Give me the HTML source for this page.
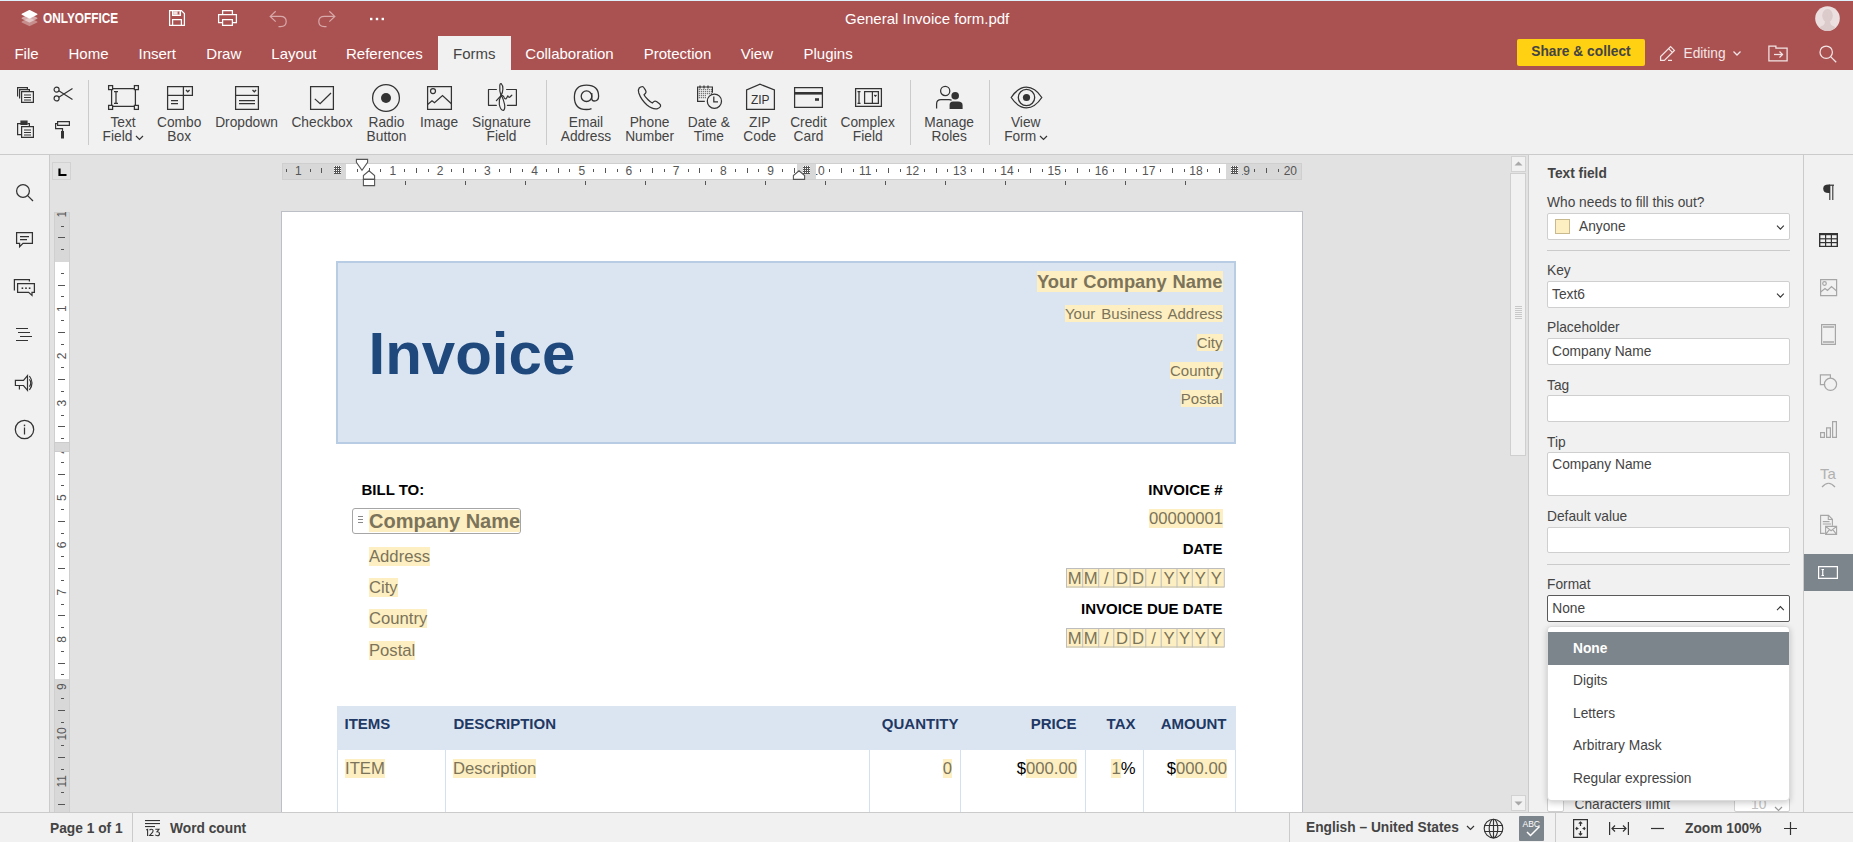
<!DOCTYPE html>
<html><head><meta charset="utf-8"><title>ONLYOFFICE</title>
<style>
html,body{margin:0;padding:0;width:1853px;height:842px;overflow:hidden;background:#f1f1f1;font-family:"Liberation Sans", sans-serif;}
.a{position:absolute;}
.t{position:absolute;white-space:nowrap;}
svg.a{overflow:visible;}
</style></head><body>
<div class="a" style="left:0px;top:0px;width:1853px;height:1px;background:#ddf2fc"></div>
<div class="a" style="left:0px;top:1px;width:1853px;height:69px;background:#aa5252"></div>
<svg class="a" style="left:21px;top:9px;" width="17" height="18" viewBox="0 0 17 18"><path d="M8.2 8.7 Q8.5 8.6 8.8 8.7 L16.2 12.4 Q16.8 12.9 16.2 13.4 L8.8 17.1 Q8.5 17.2 8.2 17.1 L0.8 13.4 Q0.2 12.9 0.8 12.4 Z" fill="#fff" opacity="0.35"/><path d="M0 0 H17 V12.3 L8.5 16.5 L0 12.3 Z" fill="none"/><path d="M8.2 5.0 Q8.5 4.8 8.8 5.0 L16.2 8.7 Q16.8 9.2 16.2 9.7 L8.8 13.4 Q8.5 13.5 8.2 13.4 L0.8 9.7 Q0.2 9.2 0.8 8.7 Z" fill="#fff" opacity="0.5"/><path d="M8.2 1.0 Q8.5 0.9 8.8 1.0 L16.2 4.7 Q16.8 5.2 16.2 5.7 L8.8 9.4 Q8.5 9.6 8.2 9.4 L0.8 5.7 Q0.2 5.2 0.8 4.7 Z" fill="#fff" opacity="1"/></svg>
<div class="t" style="left:42.60px;top:11.15px;font-size:14px;line-height:14px;font-weight:700;color:#fff;transform:scaleX(0.845);transform-origin:0 0;">ONLYOFFICE</div>
<svg class="a" style="left:168px;top:9px;" width="18" height="18" viewBox="0 0 18 18"><g fill="none" stroke="#fff" stroke-width="1.25">
      <path d="M1.6 1.6 H13.4 L16.4 4.6 V16.4 H1.6 Z"/>
      <path d="M4.6 1.6 V6.4 H12.4 V1.6"/>
      <path d="M4.6 16.4 V10.6 H13.4 V16.4"/>
      </g><rect x="5.2" y="2.2" width="6.6" height="3.6" fill="#f3dede"/><rect x="9.6" y="2.6" width="1.6" height="2.8" fill="#aa5252"/></svg>
<svg class="a" style="left:217px;top:9px;" width="21" height="18" viewBox="0 0 21 18"><g fill="none" stroke="#fff" stroke-width="1.25">
      <path d="M5.6 5.6 V1.6 H15.4 V5.6"/>
      <path d="M5.6 13.6 H1.6 V5.6 H19.4 V13.6 H15.4"/>
      <path d="M5.6 10.6 H15.4 V16.4 H5.6 Z"/></g></svg>
<svg class="a" style="left:269px;top:10px;" width="19" height="18" viewBox="0 0 19 18"><path d="M6.7 1.2 L1.2 6.4 L6.7 11.6 M1.2 6.4 H11.5 Q17.2 6.4 17.2 11.5 Q17.2 16.6 11.5 16.6 H9.5" fill="none" stroke="#d9a9a9" stroke-width="1.2"/></svg>
<svg class="a" style="left:318px;top:10px;" width="19" height="18" viewBox="0 0 19 18"><path d="M11.3 1.2 L16.8 6.4 L11.3 11.6 M16.8 6.4 H6.5 Q0.8 6.4 0.8 11.5 Q0.8 16.6 6.5 16.6 H8.5" fill="none" stroke="#d9a9a9" stroke-width="1.2"/></svg>
<svg class="a" style="left:369px;top:17px;" width="16" height="4" viewBox="0 0 16 4"><g fill="#fff"><rect x="1" y="0.8" width="2.4" height="2.4"/><rect x="6.8" y="0.8" width="2.4" height="2.4"/><rect x="12.6" y="0.8" width="2.4" height="2.4"/></g></svg>
<div class="t" style="left:845.00px;top:10.70px;font-size:15px;line-height:15px;font-weight:400;color:#fff;">General Invoice form.pdf</div>
<svg class="a" style="left:1815px;top:6px;" width="25" height="25" viewBox="0 0 25 25"><defs><clipPath id="avc"><circle cx="12.5" cy="12.5" r="12.3"/></clipPath></defs>
      <circle cx="12.5" cy="12.5" r="12.3" fill="#ecdfdf"/>
      <g clip-path="url(#avc)" fill="#dbcbcb"><ellipse cx="12.5" cy="9.6" rx="5.3" ry="6.6"/>
      <path d="M10 14 H15 Q15 18.5 17 19.5 Q21.5 20.5 22 26 H3 Q3.5 20.5 8 19.5 Q10 18.5 10 14 Z"/></g></svg>
<div class="a" style="left:438px;top:36px;width:73px;height:34px;background:#f1f1f1"></div>
<div class="t" style="left:14.40px;top:46.30px;font-size:15px;line-height:15px;font-weight:400;color:#fff;">File</div>
<div class="t" style="left:68.50px;top:46.30px;font-size:15px;line-height:15px;font-weight:400;color:#fff;">Home</div>
<div class="t" style="left:138.50px;top:46.30px;font-size:15px;line-height:15px;font-weight:400;color:#fff;">Insert</div>
<div class="t" style="left:206.30px;top:46.30px;font-size:15px;line-height:15px;font-weight:400;color:#fff;">Draw</div>
<div class="t" style="left:271.30px;top:46.30px;font-size:15px;line-height:15px;font-weight:400;color:#fff;">Layout</div>
<div class="t" style="left:346.00px;top:46.30px;font-size:15px;line-height:15px;font-weight:400;color:#fff;">References</div>
<div class="t" style="left:453.00px;top:46.30px;font-size:15px;line-height:15px;font-weight:400;color:#444;">Forms</div>
<div class="t" style="left:525.30px;top:46.30px;font-size:15px;line-height:15px;font-weight:400;color:#fff;">Collaboration</div>
<div class="t" style="left:643.70px;top:46.30px;font-size:15px;line-height:15px;font-weight:400;color:#fff;">Protection</div>
<div class="t" style="left:740.80px;top:46.30px;font-size:15px;line-height:15px;font-weight:400;color:#fff;">View</div>
<div class="t" style="left:803.50px;top:46.30px;font-size:15px;line-height:15px;font-weight:400;color:#fff;">Plugins</div>
<div class="a" style="left:1517px;top:39px;width:128px;height:27px;background:#ffd112;border-radius:2px"></div>
<div class="t" style="left:1531.30px;top:44.86px;font-size:13.75px;line-height:13.75px;font-weight:700;color:#444;">Share &amp; collect</div>
<svg class="a" style="left:1659px;top:44px;" width="18" height="18" viewBox="0 0 18 18"><g fill="none" stroke="#f3e5e5" stroke-width="1.25">
      <path d="M1.6 16.4 V12.6 L11.6 2.6 L15.4 6.4 L5.4 16.4 Z"/><path d="M9.6 4.6 L13.4 8.4"/><path d="M9 16.4 H13"/></g></svg>
<div class="t" style="left:1683.50px;top:46.86px;font-size:13.75px;line-height:13.75px;font-weight:400;color:#f3e5e5;">Editing</div>
<svg class="a" style="left:1732px;top:50px;" width="10" height="7" viewBox="0 0 10 7"><path d="M1.5 1.5 L5 5 L8.5 1.5" fill="none" stroke="#f3e5e5" stroke-width="1.25"/></svg>
<svg class="a" style="left:1768px;top:45px;" width="21" height="17" viewBox="0 0 21 17"><g fill="none" stroke="#f3e5e5" stroke-width="1.25">
      <path d="M0.9 15.9 V1.1 H7.9 V3.1 H19.1 V15.9 Z"/><path d="M6 9.5 H14.5"/><path d="M11.5 6.5 L14.5 9.5 L11.5 12.5"/></g></svg>
<svg class="a" style="left:1819px;top:45px;" width="18" height="18" viewBox="0 0 18 18"><g fill="none" stroke="#f3e5e5" stroke-width="1.25">
      <circle cx="7.2" cy="7.2" r="6.2"/><path d="M11.6 11.6 L17.2 17.2"/></g></svg>
<div class="a" style="left:0px;top:70px;width:1853px;height:84px;background:#f1f1f1"></div>
<div class="a" style="left:0px;top:154px;width:1853px;height:1px;background:#cbcbcb"></div>
<svg class="a" style="left:16px;top:86px;" width="19" height="18" viewBox="0 0 19 18"><g fill="none" stroke="#333" stroke-width="1.2">
      <path d="M1.6 10.6 V1.6 H11.4 V3.6"/><path d="M3.6 12.6 V3.6 H13.4 V5.6"/>
      <path d="M5.6 5.6 H17.4 V16.4 H5.6 Z"/><path d="M8 9 H15 M8 11.5 H15 M8 14 H15"/></g></svg>
<svg class="a" style="left:53px;top:86px;" width="21" height="16" viewBox="0 0 21 16"><g fill="none" stroke="#333" stroke-width="1.2">
      <circle cx="3.6" cy="3.6" r="2.5"/><circle cx="3.6" cy="12.4" r="2.5"/>
      <path d="M5.8 4.8 L19.5 13.5 M5.8 11.2 L19.5 2.5"/></g></svg>
<svg class="a" style="left:16px;top:120px;" width="19" height="19" viewBox="0 0 19 19"><g fill="none" stroke="#333" stroke-width="1.2">
      <path d="M5.6 3.6 H1.6 V14.6 H5.6"/><path d="M5 1.2 H11 V4.4 H5 Z" fill="#333"/><path d="M11.4 3.6 H13.4 V6"/>
      <path d="M5.6 6.6 H17.4 V17.4 H5.6 Z"/><path d="M8 10 H15 M8 12.5 H15 M8 15 H15"/></g></svg>
<svg class="a" style="left:54px;top:120px;" width="17" height="19" viewBox="0 0 17 19"><g fill="none" stroke="#333" stroke-width="1.2">
      <path d="M3.6 1.6 H15.4 V5.4 H3.6 Z"/><path d="M3.6 3.6 H1.6 V8.6 H8.5 V11"/></g>
      <rect x="7" y="11" width="3" height="7.5" fill="#333"/></svg>
<div class="a" style="left:88px;top:80px;width:1px;height:65px;background:#cbcbcb"></div>
<div class="a" style="left:546px;top:80px;width:1px;height:65px;background:#cbcbcb"></div>
<div class="a" style="left:910px;top:80px;width:1px;height:65px;background:#cbcbcb"></div>
<div class="a" style="left:989px;top:80px;width:1px;height:65px;background:#cbcbcb"></div>
<div class="t" style="left:-177.00px;width:600px;text-align:center;top:115.96px;font-size:13.75px;line-height:13.75px;font-weight:400;color:#444;">Text</div>
<div class="t" style="left:-182.50px;width:600px;text-align:center;top:129.96px;font-size:13.75px;line-height:13.75px;font-weight:400;color:#444;">Field</div>
<svg class="a" style="left:135px;top:135px;" width="9" height="6" viewBox="0 0 9 6"><path d="M1 1 L4.5 4.5 L8 1" fill="none" stroke="#333" stroke-width="1.2"/></svg>
<div class="t" style="left:-120.80px;width:600px;text-align:center;top:115.96px;font-size:13.75px;line-height:13.75px;font-weight:400;color:#444;">Combo</div>
<div class="t" style="left:-120.80px;width:600px;text-align:center;top:129.96px;font-size:13.75px;line-height:13.75px;font-weight:400;color:#444;">Box</div>
<div class="t" style="left:-53.50px;width:600px;text-align:center;top:115.96px;font-size:13.75px;line-height:13.75px;font-weight:400;color:#444;">Dropdown</div>
<div class="t" style="left:22.00px;width:600px;text-align:center;top:115.96px;font-size:13.75px;line-height:13.75px;font-weight:400;color:#444;">Checkbox</div>
<div class="t" style="left:86.50px;width:600px;text-align:center;top:115.96px;font-size:13.75px;line-height:13.75px;font-weight:400;color:#444;">Radio</div>
<div class="t" style="left:86.50px;width:600px;text-align:center;top:129.96px;font-size:13.75px;line-height:13.75px;font-weight:400;color:#444;">Button</div>
<div class="t" style="left:139.00px;width:600px;text-align:center;top:115.96px;font-size:13.75px;line-height:13.75px;font-weight:400;color:#444;">Image</div>
<div class="t" style="left:201.50px;width:600px;text-align:center;top:115.96px;font-size:13.75px;line-height:13.75px;font-weight:400;color:#444;">Signature</div>
<div class="t" style="left:201.50px;width:600px;text-align:center;top:129.96px;font-size:13.75px;line-height:13.75px;font-weight:400;color:#444;">Field</div>
<div class="t" style="left:286.00px;width:600px;text-align:center;top:115.96px;font-size:13.75px;line-height:13.75px;font-weight:400;color:#444;">Email</div>
<div class="t" style="left:286.00px;width:600px;text-align:center;top:129.96px;font-size:13.75px;line-height:13.75px;font-weight:400;color:#444;">Address</div>
<div class="t" style="left:349.60px;width:600px;text-align:center;top:115.96px;font-size:13.75px;line-height:13.75px;font-weight:400;color:#444;">Phone</div>
<div class="t" style="left:349.60px;width:600px;text-align:center;top:129.96px;font-size:13.75px;line-height:13.75px;font-weight:400;color:#444;">Number</div>
<div class="t" style="left:408.80px;width:600px;text-align:center;top:115.96px;font-size:13.75px;line-height:13.75px;font-weight:400;color:#444;">Date &amp;</div>
<div class="t" style="left:408.80px;width:600px;text-align:center;top:129.96px;font-size:13.75px;line-height:13.75px;font-weight:400;color:#444;">Time</div>
<div class="t" style="left:459.80px;width:600px;text-align:center;top:115.96px;font-size:13.75px;line-height:13.75px;font-weight:400;color:#444;">ZIP</div>
<div class="t" style="left:459.80px;width:600px;text-align:center;top:129.96px;font-size:13.75px;line-height:13.75px;font-weight:400;color:#444;">Code</div>
<div class="t" style="left:508.50px;width:600px;text-align:center;top:115.96px;font-size:13.75px;line-height:13.75px;font-weight:400;color:#444;">Credit</div>
<div class="t" style="left:508.50px;width:600px;text-align:center;top:129.96px;font-size:13.75px;line-height:13.75px;font-weight:400;color:#444;">Card</div>
<div class="t" style="left:567.70px;width:600px;text-align:center;top:115.96px;font-size:13.75px;line-height:13.75px;font-weight:400;color:#444;">Complex</div>
<div class="t" style="left:567.70px;width:600px;text-align:center;top:129.96px;font-size:13.75px;line-height:13.75px;font-weight:400;color:#444;">Field</div>
<div class="t" style="left:649.20px;width:600px;text-align:center;top:115.96px;font-size:13.75px;line-height:13.75px;font-weight:400;color:#444;">Manage</div>
<div class="t" style="left:649.20px;width:600px;text-align:center;top:129.96px;font-size:13.75px;line-height:13.75px;font-weight:400;color:#444;">Roles</div>
<div class="t" style="left:725.70px;width:600px;text-align:center;top:115.96px;font-size:13.75px;line-height:13.75px;font-weight:400;color:#444;">View</div>
<div class="t" style="left:720.20px;width:600px;text-align:center;top:129.96px;font-size:13.75px;line-height:13.75px;font-weight:400;color:#444;">Form</div>
<svg class="a" style="left:1039px;top:135px;" width="9" height="6" viewBox="0 0 9 6"><path d="M1 1 L4.5 4.5 L8 1" fill="none" stroke="#333" stroke-width="1.2"/></svg>
<svg class="a" style="left:108px;top:85px;" width="32" height="26" viewBox="0 0 32 26"><g fill="none" stroke="#333" stroke-width="1.25">
      <path d="M3.6 3.6 H27.4 V21.4 H3.6 Z"/>
      <rect x="0.6" y="0.6" width="4" height="4" fill="#f1f1f1"/><rect x="26.4" y="0.6" width="4" height="4" fill="#f1f1f1"/>
      <rect x="0.6" y="20.4" width="4" height="4" fill="#f1f1f1"/><rect x="26.4" y="20.4" width="4" height="4" fill="#f1f1f1"/>
      <path d="M6 6.6 H10 M8 6.6 V18.4 M6 18.4 H10"/></g></svg>
<svg class="a" style="left:166px;top:85px;" width="28" height="26" viewBox="0 0 28 26"><g fill="none" stroke="#333" stroke-width="1.25">
      <path d="M1.6 1.6 H17.4 V24.4 H1.6 Z"/><path d="M1.6 10.4 H17.4"/><path d="M17.4 1.6 H26.4 V10.4 H17.4"/>
      <path d="M5 15.6 H12 M5 18.6 H12"/><path d="M20 5 L21.8 6.8 L23.6 5"/></g></svg>
<svg class="a" style="left:234px;top:85px;" width="26" height="26" viewBox="0 0 26 26"><g fill="none" stroke="#333" stroke-width="1.25">
      <path d="M1.6 1.6 H24.4 V24.4 H1.6 Z"/><path d="M1.6 10.4 H24.4"/>
      <path d="M5 15.6 H21 M5 18.6 H21"/><path d="M18.5 5 L20.3 6.8 L22.1 5"/></g></svg>
<svg class="a" style="left:309px;top:85px;" width="26" height="26" viewBox="0 0 26 26"><g fill="none" stroke="#333" stroke-width="1.25">
      <path d="M1.6 1.6 H24.4 V24.4 H1.6 Z"/><path d="M5.8 13.9 L11.1 18.7 L22 8"/></g></svg>
<svg class="a" style="left:371px;top:83px;" width="30" height="30" viewBox="0 0 30 30"><circle cx="15" cy="15" r="13.4" fill="none" stroke="#333" stroke-width="1.25"/><circle cx="15" cy="15" r="5" fill="#333"/></svg>
<svg class="a" style="left:426px;top:85px;" width="27" height="26" viewBox="0 0 27 26"><g fill="none" stroke="#333" stroke-width="1.25">
      <path d="M1.6 1.6 H25.4 V24.4 H1.6 Z"/><circle cx="7" cy="6" r="2.5"/>
      <path d="M1.6 19.5 L6 15.8 L8.5 17.8 L16.5 10.5 L25.4 18.8"/></g></svg>
<svg class="a" style="left:486px;top:82px;" width="32" height="30" viewBox="0 0 32 30"><g fill="none" stroke="#333" stroke-width="1.2" stroke-linecap="round" stroke-linejoin="round">
      <path d="M10.4 7.5 H2.5 V23.3 H10.4"/><path d="M20.6 7.5 H30.4 V23.3 H21.4"/>
      <path d="M15 13.5 Q13.3 9 13.8 3.5 Q14.1 1.2 15.2 1.6 Q17 3.2 16.9 7 Q16.7 11 15 13.5"/>
      <path d="M15 13.5 Q12.7 18 13.3 22.5 Q14.5 28.3 17.3 28.5 Q19.3 27.3 18.6 22.5 Q17.6 17.5 15.4 13.3"/>
      <path d="M10.4 18.6 L15.2 13.5 Q16.6 12.8 17.7 14.6 Q18.6 17.2 19.8 17 Q21 15.8 21.8 13.8 Q22.7 15.6 23.6 15.3 L25.8 13.2"/></g></svg>
<svg class="a" style="left:573px;top:84px;" width="27" height="27" viewBox="0 0 27 27"><g fill="none" stroke="#333" stroke-width="1.3">
      <circle cx="13.5" cy="12.2" r="5.3"/>
      <path d="M18.8 9 V14.5 Q18.8 17 21.2 17 Q25.6 17 25.6 12.2 Q25.6 1.2 13.5 1.2 Q1.4 1.2 1.4 13.2 Q1.4 25.5 13.5 25.5 Q16.5 25.5 18.5 24.6"/></g></svg>
<svg class="a" style="left:637px;top:85px;" width="25" height="25" viewBox="0 0 25 25"><path d="M5.5 1.5 Q3.5 1.5 2.2 3 Q0.8 4.6 1.8 8 Q4 14.5 10 20 Q15.5 24.5 20 23.8 Q22.5 23.2 23.5 21.5 Q24 20 22.5 18.8 L19.5 16.5 Q18 15.5 16.8 16.6 L15.3 18 Q13.5 17.2 10.8 14.5 Q7.8 11.5 7 9.8 L8.5 8.3 Q9.6 7 8.6 5.4 L6.8 2.5 Q6.3 1.6 5.5 1.5 Z" fill="none" stroke="#333" stroke-width="1.25"/></svg>
<svg class="a" style="left:696px;top:84px;" width="27" height="27" viewBox="0 0 27 27"><g fill="none" stroke="#333" stroke-width="1.2">
      <path d="M16.4 8.8 V3 H1.6 V17.4 H8.8"/><path d="M4 1.5 V4.5 M8 1.5 V4.5 M12 1.5 V4.5"/></g><rect x="2.8" y="5.2" width="1" height="1" fill="#333"/><rect x="2.8" y="7.2" width="1" height="1" fill="#333"/><rect x="2.8" y="9.2" width="1" height="1" fill="#333"/><rect x="2.8" y="11.2" width="1" height="1" fill="#333"/><rect x="2.8" y="13.2" width="1" height="1" fill="#333"/><rect x="4.8" y="5.2" width="1" height="1" fill="#333"/><rect x="4.8" y="7.2" width="1" height="1" fill="#333"/><rect x="4.8" y="9.2" width="1" height="1" fill="#333"/><rect x="4.8" y="11.2" width="1" height="1" fill="#333"/><rect x="4.8" y="13.2" width="1" height="1" fill="#333"/><rect x="6.8" y="5.2" width="1" height="1" fill="#333"/><rect x="6.8" y="7.2" width="1" height="1" fill="#333"/><rect x="6.8" y="9.2" width="1" height="1" fill="#333"/><rect x="6.8" y="11.2" width="1" height="1" fill="#333"/><rect x="6.8" y="13.2" width="1" height="1" fill="#333"/><rect x="8.8" y="5.2" width="1" height="1" fill="#333"/><rect x="8.8" y="7.2" width="1" height="1" fill="#333"/><rect x="8.8" y="9.2" width="1" height="1" fill="#333"/><rect x="8.8" y="11.2" width="1" height="1" fill="#333"/><rect x="8.8" y="13.2" width="1" height="1" fill="#333"/><rect x="10.8" y="5.2" width="1" height="1" fill="#333"/><rect x="10.8" y="7.2" width="1" height="1" fill="#333"/><rect x="10.8" y="9.2" width="1" height="1" fill="#333"/><rect x="12.8" y="5.2" width="1" height="1" fill="#333"/><rect x="12.8" y="7.2" width="1" height="1" fill="#333"/><rect x="12.8" y="9.2" width="1" height="1" fill="#333"/><rect x="14.8" y="5.2" width="1" height="1" fill="#333"/><rect x="14.8" y="7.2" width="1" height="1" fill="#333"/><rect x="14.8" y="9.2" width="1" height="1" fill="#333"/>
      <circle cx="18.4" cy="17.2" r="7.1" fill="#f1f1f1" stroke="#333" stroke-width="1.25"/>
      <path d="M17.8 12.5 V17.8 H22" fill="none" stroke="#333" stroke-width="1.25"/></svg>
<svg class="a" style="left:745px;top:83px;" width="31" height="28" viewBox="0 0 31 28"><path d="M1.6 26.4 V7 L15 1.2 L29.4 7 V26.4 Z" fill="none" stroke="#333" stroke-width="1.25"/>
      <text x="15.3" y="20.6" text-anchor="middle" font-family="Liberation Sans" font-size="12" fill="#333">ZIP</text></svg>
<svg class="a" style="left:793px;top:86px;" width="31" height="23" viewBox="0 0 31 23"><g fill="none" stroke="#333" stroke-width="1.25"><path d="M1.6 1.6 H29.4 V21.4 H1.6 Z"/></g>
      <rect x="1.6" y="6" width="27.8" height="2.6" fill="#333"/><rect x="22" y="12.2" width="4" height="2.6" fill="#333"/></svg>
<svg class="a" style="left:854px;top:87px;" width="29" height="21" viewBox="0 0 29 21"><g fill="none" stroke="#333" stroke-width="1.25">
      <path d="M1.6 1.6 H27.4 V19.4 H1.6 Z"/><path d="M10.6 4.6 H24.4 V16.4 H10.6 Z"/><path d="M18.4 4.6 V16.4"/>
      <path d="M3.5 4.6 H6.5 M5 4.6 V16.4 M3.5 16.4 H6.5"/><path d="M20.3 8 L21.4 9.1 L22.5 8"/></g></svg>
<svg class="a" style="left:935px;top:85px;" width="29" height="25" viewBox="0 0 29 25"><g fill="none" stroke="#333" stroke-width="1.25">
      <circle cx="10.2" cy="6" r="4.6"/><path d="M1.6 23.4 V19 Q1.6 14.6 6 14.6 H14 Q15.6 14.6 16.6 15.2"/></g>
      <circle cx="20.2" cy="10.8" r="3.8" fill="#333"/><path d="M14.6 23.9 V20 Q14.6 16.4 18 16.4 H23 Q27.6 16.4 27.6 20 V23.9 Z" fill="#333"/></svg>
<svg class="a" style="left:1010px;top:86px;" width="33" height="23" viewBox="0 0 33 23"><g fill="none" stroke="#333" stroke-width="1.3">
      <path d="M1.2 11.5 Q8 1.2 16.5 1.2 Q25 1.2 31.8 11.5 Q25 21.8 16.5 21.8 Q8 21.8 1.2 11.5 Z"/>
      <circle cx="16.5" cy="11.5" r="8.2"/></g><circle cx="16.5" cy="11.5" r="3.6" fill="#333"/></svg>
<div class="a" style="left:0px;top:155px;width:49px;height:657px;background:#f1f1f1"></div>
<div class="a" style="left:49px;top:155px;width:1px;height:657px;background:#cbcbcb"></div>
<svg class="a" style="left:15px;top:183px;" width="20" height="20" viewBox="0 0 20 20"><g fill="none" stroke="#333" stroke-width="1.25"><circle cx="8" cy="8" r="6.4"/><path d="M12.6 12.6 L18 18"/></g></svg>
<svg class="a" style="left:15px;top:231px;" width="20" height="18" viewBox="0 0 20 18"><path d="M1.6 1.6 H17.4 V12.4 H8 L4.6 15.8 V12.4 H1.6 Z M5 5.5 H14 M5 8.5 H12" fill="none" stroke="#333" stroke-width="1.25"/></svg>
<svg class="a" style="left:13px;top:278px;" width="23" height="19" viewBox="0 0 23 19"><g fill="none" stroke="#333" stroke-width="1.25"><path d="M1.4 12.6 V1.6 H16.4 V3.6"/><path d="M4.6 5.6 H21.4 V14.4 H19 V17.4 L15.6 14.4 H4.6 Z"/></g><g fill="#333"><rect x="8.6" y="9.4" width="1.6" height="1.6"/><rect x="12.2" y="9.4" width="1.6" height="1.6"/><rect x="15.8" y="9.4" width="1.6" height="1.6"/></g></svg>
<svg class="a" style="left:15px;top:327px;" width="18" height="15" viewBox="0 0 18 15"><path d="M1 1.5 H13 M3 5.5 H15 M5 9.5 H17 M1 13.5 H13" fill="none" stroke="#333" stroke-width="1.1"/></svg>
<svg class="a" style="left:14px;top:374px;" width="21" height="18" viewBox="0 0 21 18"><g fill="none" stroke="#333" stroke-width="1.2"><path d="M1.4 6.4 H9.5 L13.5 1.6 V16.4 L9.5 11.5 H1.4 Z"/><path d="M5.4 11.5 V15.6"/><path d="M15.4 5.4 Q18.2 9 15.4 12.6"/><path d="M15.4 2 Q20.6 9 15.4 16"/></g></svg>
<svg class="a" style="left:14px;top:419px;" width="21" height="21" viewBox="0 0 21 21"><g fill="none" stroke="#333" stroke-width="1.25"><circle cx="10.5" cy="10.5" r="9.2"/><path d="M10.5 8.5 V15.5"/></g><rect x="9.8" y="5.6" width="1.4" height="1.6" fill="#333"/></svg>
<div class="a" style="left:50px;top:155px;width:1478px;height:657px;background:#e2e2e2"></div>
<div class="a" style="left:52px;top:162px;width:19px;height:18px;border:1px solid #d2d2d2;box-sizing:border-box;background:#e2e2e2"></div>
<svg class="a" style="left:57px;top:167px;" width="11" height="11" viewBox="0 0 11 11"><path d="M2.5 1.5 V8 H9.5" fill="none" stroke="#000" stroke-width="2.2"/></svg>
<div class="a" style="left:282px;top:163px;width:1020px;height:17px;background:#d8d8d8;border:1px solid #cfcfcf;box-sizing:border-box"></div>
<div class="a" style="left:346px;top:164px;width:453px;height:15px;background:#fff"></div>
<div class="a" style="left:816px;top:164px;width:410px;height:15px;background:#fff"></div>
<svg class="a" style="left:282px;top:163px;" width="1020" height="17" viewBox="0 0 1020 17"><rect x="4" y="6" width="1" height="3" fill="#555"/><rect x="28" y="6" width="1" height="3" fill="#555"/><rect x="39" y="5" width="1" height="5" fill="#555"/><rect x="51" y="6" width="1" height="3" fill="#555"/><rect x="75" y="6" width="1" height="3" fill="#555"/><rect x="87" y="5" width="1" height="5" fill="#555"/><rect x="98" y="6" width="1" height="3" fill="#555"/><rect x="122" y="6" width="1" height="3" fill="#555"/><rect x="134" y="5" width="1" height="5" fill="#555"/><rect x="146" y="6" width="1" height="3" fill="#555"/><rect x="169" y="6" width="1" height="3" fill="#555"/><rect x="181" y="5" width="1" height="5" fill="#555"/><rect x="193" y="6" width="1" height="3" fill="#555"/><rect x="217" y="6" width="1" height="3" fill="#555"/><rect x="228" y="5" width="1" height="5" fill="#555"/><rect x="240" y="6" width="1" height="3" fill="#555"/><rect x="264" y="6" width="1" height="3" fill="#555"/><rect x="276" y="5" width="1" height="5" fill="#555"/><rect x="287" y="6" width="1" height="3" fill="#555"/><rect x="311" y="6" width="1" height="3" fill="#555"/><rect x="323" y="5" width="1" height="5" fill="#555"/><rect x="335" y="6" width="1" height="3" fill="#555"/><rect x="358" y="6" width="1" height="3" fill="#555"/><rect x="370" y="5" width="1" height="5" fill="#555"/><rect x="382" y="6" width="1" height="3" fill="#555"/><rect x="406" y="6" width="1" height="3" fill="#555"/><rect x="417" y="5" width="1" height="5" fill="#555"/><rect x="429" y="6" width="1" height="3" fill="#555"/><rect x="453" y="6" width="1" height="3" fill="#555"/><rect x="465" y="5" width="1" height="5" fill="#555"/><rect x="476" y="6" width="1" height="3" fill="#555"/><rect x="500" y="6" width="1" height="3" fill="#555"/><rect x="512" y="5" width="1" height="5" fill="#555"/><rect x="524" y="6" width="1" height="3" fill="#555"/><rect x="547" y="6" width="1" height="3" fill="#555"/><rect x="559" y="5" width="1" height="5" fill="#555"/><rect x="571" y="6" width="1" height="3" fill="#555"/><rect x="594" y="6" width="1" height="3" fill="#555"/><rect x="606" y="5" width="1" height="5" fill="#555"/><rect x="618" y="6" width="1" height="3" fill="#555"/><rect x="642" y="6" width="1" height="3" fill="#555"/><rect x="654" y="5" width="1" height="5" fill="#555"/><rect x="665" y="6" width="1" height="3" fill="#555"/><rect x="689" y="6" width="1" height="3" fill="#555"/><rect x="701" y="5" width="1" height="5" fill="#555"/><rect x="713" y="6" width="1" height="3" fill="#555"/><rect x="736" y="6" width="1" height="3" fill="#555"/><rect x="748" y="5" width="1" height="5" fill="#555"/><rect x="760" y="6" width="1" height="3" fill="#555"/><rect x="783" y="6" width="1" height="3" fill="#555"/><rect x="795" y="5" width="1" height="5" fill="#555"/><rect x="807" y="6" width="1" height="3" fill="#555"/><rect x="831" y="6" width="1" height="3" fill="#555"/><rect x="843" y="5" width="1" height="5" fill="#555"/><rect x="854" y="6" width="1" height="3" fill="#555"/><rect x="878" y="6" width="1" height="3" fill="#555"/><rect x="890" y="5" width="1" height="5" fill="#555"/><rect x="902" y="6" width="1" height="3" fill="#555"/><rect x="925" y="6" width="1" height="3" fill="#555"/><rect x="937" y="5" width="1" height="5" fill="#555"/><rect x="949" y="6" width="1" height="3" fill="#555"/><rect x="972" y="6" width="1" height="3" fill="#555"/><rect x="984" y="5" width="1" height="5" fill="#555"/><rect x="996" y="6" width="1" height="3" fill="#555"/><text x="16.26" y="12" text-anchor="middle" font-family="Liberation Sans" font-size="12" fill="#555">1</text><text x="110.74" y="12" text-anchor="middle" font-family="Liberation Sans" font-size="12" fill="#555">1</text><text x="157.99" y="12" text-anchor="middle" font-family="Liberation Sans" font-size="12" fill="#555">2</text><text x="205.23" y="12" text-anchor="middle" font-family="Liberation Sans" font-size="12" fill="#555">3</text><text x="252.48" y="12" text-anchor="middle" font-family="Liberation Sans" font-size="12" fill="#555">4</text><text x="299.72" y="12" text-anchor="middle" font-family="Liberation Sans" font-size="12" fill="#555">5</text><text x="346.96" y="12" text-anchor="middle" font-family="Liberation Sans" font-size="12" fill="#555">6</text><text x="394.21" y="12" text-anchor="middle" font-family="Liberation Sans" font-size="12" fill="#555">7</text><text x="441.45" y="12" text-anchor="middle" font-family="Liberation Sans" font-size="12" fill="#555">8</text><text x="488.70" y="12" text-anchor="middle" font-family="Liberation Sans" font-size="12" fill="#555">9</text><text x="535.94" y="12" text-anchor="middle" font-family="Liberation Sans" font-size="12" fill="#555">10</text><text x="583.18" y="12" text-anchor="middle" font-family="Liberation Sans" font-size="12" fill="#555">11</text><text x="630.43" y="12" text-anchor="middle" font-family="Liberation Sans" font-size="12" fill="#555">12</text><text x="677.67" y="12" text-anchor="middle" font-family="Liberation Sans" font-size="12" fill="#555">13</text><text x="724.92" y="12" text-anchor="middle" font-family="Liberation Sans" font-size="12" fill="#555">14</text><text x="772.16" y="12" text-anchor="middle" font-family="Liberation Sans" font-size="12" fill="#555">15</text><text x="819.40" y="12" text-anchor="middle" font-family="Liberation Sans" font-size="12" fill="#555">16</text><text x="866.65" y="12" text-anchor="middle" font-family="Liberation Sans" font-size="12" fill="#555">17</text><text x="913.89" y="12" text-anchor="middle" font-family="Liberation Sans" font-size="12" fill="#555">18</text><text x="961.14" y="12" text-anchor="middle" font-family="Liberation Sans" font-size="12" fill="#555">19</text><text x="1008.38" y="12" text-anchor="middle" font-family="Liberation Sans" font-size="12" fill="#555">20</text></svg>
<div class="a" style="left:330px;top:164px;width:14px;height:15px;background:#d8d8d8"></div>
<svg class="a" style="left:334px;top:166px;" width="8" height="8" viewBox="0 0 8 8"><rect x="0" y="0" width="7" height="8" fill="#fff"/><rect x="1" y="0" width="1" height="8" fill="#555"/><rect x="3" y="0" width="1" height="8" fill="#555"/><rect x="5" y="0" width="1" height="8" fill="#555"/><rect x="0" y="1" width="7" height="1" fill="#555"/><rect x="0" y="3" width="7" height="1" fill="#555"/><rect x="0" y="5" width="7" height="1" fill="#555"/><rect x="0" y="7" width="7" height="1" fill="#555"/></svg>
<div class="a" style="left:797px;top:164px;width:19px;height:15px;background:#d8d8d8"></div>
<svg class="a" style="left:803px;top:166px;" width="8" height="8" viewBox="0 0 8 8"><rect x="0" y="0" width="7" height="8" fill="#fff"/><rect x="1" y="0" width="1" height="8" fill="#555"/><rect x="3" y="0" width="1" height="8" fill="#555"/><rect x="5" y="0" width="1" height="8" fill="#555"/><rect x="0" y="1" width="7" height="1" fill="#555"/><rect x="0" y="3" width="7" height="1" fill="#555"/><rect x="0" y="5" width="7" height="1" fill="#555"/><rect x="0" y="7" width="7" height="1" fill="#555"/></svg>
<div class="a" style="left:1226px;top:164px;width:16px;height:15px;background:#d8d8d8"></div>
<svg class="a" style="left:1231px;top:166px;" width="8" height="8" viewBox="0 0 8 8"><rect x="0" y="0" width="7" height="8" fill="#fff"/><rect x="1" y="0" width="1" height="8" fill="#555"/><rect x="3" y="0" width="1" height="8" fill="#555"/><rect x="5" y="0" width="1" height="8" fill="#555"/><rect x="0" y="1" width="7" height="1" fill="#555"/><rect x="0" y="3" width="7" height="1" fill="#555"/><rect x="0" y="5" width="7" height="1" fill="#555"/><rect x="0" y="7" width="7" height="1" fill="#555"/></svg>
<div class="a" style="left:404.7px;top:181px;width:1.4px;height:4px;background:#555"></div>
<div class="a" style="left:464.7px;top:181px;width:1.4px;height:4px;background:#555"></div>
<div class="a" style="left:524.7px;top:181px;width:1.4px;height:4px;background:#555"></div>
<div class="a" style="left:584.7px;top:181px;width:1.4px;height:4px;background:#555"></div>
<div class="a" style="left:644.7px;top:181px;width:1.4px;height:4px;background:#555"></div>
<div class="a" style="left:704.7px;top:181px;width:1.4px;height:4px;background:#555"></div>
<div class="a" style="left:764.7px;top:181px;width:1.4px;height:4px;background:#555"></div>
<div class="a" style="left:824.7px;top:181px;width:1.4px;height:4px;background:#555"></div>
<div class="a" style="left:884.7px;top:181px;width:1.4px;height:4px;background:#555"></div>
<div class="a" style="left:944.7px;top:181px;width:1.4px;height:4px;background:#555"></div>
<div class="a" style="left:1004.7px;top:181px;width:1.4px;height:4px;background:#555"></div>
<div class="a" style="left:1064.7px;top:181px;width:1.4px;height:4px;background:#555"></div>
<div class="a" style="left:1124.7px;top:181px;width:1.4px;height:4px;background:#555"></div>
<div class="a" style="left:1184.7px;top:181px;width:1.4px;height:4px;background:#555"></div>
<svg class="a" style="left:355px;top:158px;" width="14" height="14" viewBox="0 0 14 14"><path d="M1.4 1.4 H12.6 V4.4 L7 12.4 L1.4 4.4 Z" fill="#fff" stroke="#555" stroke-width="1.1"/></svg>
<svg class="a" style="left:362px;top:170px;" width="14" height="17" viewBox="0 0 14 17"><path d="M1.4 9.4 V5.6 L7 0.8 L12.6 5.6 V9.4 Z" fill="#fff" stroke="#555" stroke-width="1.1"/><path d="M1.4 9.4 H12.6 V15.6 H1.4 Z" fill="#fff" stroke="#555" stroke-width="1.1"/></svg>
<svg class="a" style="left:792px;top:170px;" width="14" height="11" viewBox="0 0 14 11"><path d="M1.4 9.4 V5.6 L7 0.8 L12.6 5.6 V9.4 Z" fill="#fff" stroke="#555" stroke-width="1.1"/></svg>
<div class="a" style="left:54px;top:212px;width:16px;height:600px;background:#d8d8d8;border:1px solid #cfcfcf;border-bottom:none;box-sizing:border-box"></div>
<div class="a" style="left:55px;top:262px;width:14px;height:417px;background:#fff"></div>
<svg class="a" style="left:54px;top:212px;overflow:hidden;" width="16" height="600" viewBox="0 0 16 600"><text transform="translate(11.5 2.26) rotate(-90)" text-anchor="middle" font-family="Liberation Sans" font-size="12" fill="#555">1</text><rect x="7" y="14" width="3" height="1" fill="#555"/><rect x="4" y="25" width="7" height="1" fill="#555"/><rect x="7" y="37" width="3" height="1" fill="#555"/><rect x="7" y="61" width="3" height="1" fill="#555"/><rect x="4" y="73" width="7" height="1" fill="#555"/><rect x="7" y="84" width="3" height="1" fill="#555"/><text transform="translate(11.5 96.74) rotate(-90)" text-anchor="middle" font-family="Liberation Sans" font-size="12" fill="#555">1</text><rect x="7" y="108" width="3" height="1" fill="#555"/><rect x="4" y="120" width="7" height="1" fill="#555"/><rect x="7" y="132" width="3" height="1" fill="#555"/><text transform="translate(11.5 143.99) rotate(-90)" text-anchor="middle" font-family="Liberation Sans" font-size="12" fill="#555">2</text><rect x="7" y="155" width="3" height="1" fill="#555"/><rect x="4" y="167" width="7" height="1" fill="#555"/><rect x="7" y="179" width="3" height="1" fill="#555"/><text transform="translate(11.5 191.23) rotate(-90)" text-anchor="middle" font-family="Liberation Sans" font-size="12" fill="#555">3</text><rect x="7" y="203" width="3" height="1" fill="#555"/><rect x="4" y="214" width="7" height="1" fill="#555"/><rect x="7" y="226" width="3" height="1" fill="#555"/><text transform="translate(11.5 238.48) rotate(-90)" text-anchor="middle" font-family="Liberation Sans" font-size="12" fill="#555">4</text><rect x="7" y="250" width="3" height="1" fill="#555"/><rect x="4" y="262" width="7" height="1" fill="#555"/><rect x="7" y="273" width="3" height="1" fill="#555"/><text transform="translate(11.5 285.72) rotate(-90)" text-anchor="middle" font-family="Liberation Sans" font-size="12" fill="#555">5</text><rect x="7" y="297" width="3" height="1" fill="#555"/><rect x="4" y="309" width="7" height="1" fill="#555"/><rect x="7" y="321" width="3" height="1" fill="#555"/><text transform="translate(11.5 332.96) rotate(-90)" text-anchor="middle" font-family="Liberation Sans" font-size="12" fill="#555">6</text><rect x="7" y="344" width="3" height="1" fill="#555"/><rect x="4" y="356" width="7" height="1" fill="#555"/><rect x="7" y="368" width="3" height="1" fill="#555"/><text transform="translate(11.5 380.21) rotate(-90)" text-anchor="middle" font-family="Liberation Sans" font-size="12" fill="#555">7</text><rect x="7" y="392" width="3" height="1" fill="#555"/><rect x="4" y="403" width="7" height="1" fill="#555"/><rect x="7" y="415" width="3" height="1" fill="#555"/><text transform="translate(11.5 427.45) rotate(-90)" text-anchor="middle" font-family="Liberation Sans" font-size="12" fill="#555">8</text><rect x="7" y="439" width="3" height="1" fill="#555"/><rect x="4" y="451" width="7" height="1" fill="#555"/><rect x="7" y="462" width="3" height="1" fill="#555"/><text transform="translate(11.5 474.70) rotate(-90)" text-anchor="middle" font-family="Liberation Sans" font-size="12" fill="#555">9</text><rect x="7" y="486" width="3" height="1" fill="#555"/><rect x="4" y="498" width="7" height="1" fill="#555"/><rect x="7" y="510" width="3" height="1" fill="#555"/><text transform="translate(11.5 521.94) rotate(-90)" text-anchor="middle" font-family="Liberation Sans" font-size="12" fill="#555">10</text><rect x="7" y="533" width="3" height="1" fill="#555"/><rect x="4" y="545" width="7" height="1" fill="#555"/><rect x="7" y="557" width="3" height="1" fill="#555"/><text transform="translate(11.5 569.18) rotate(-90)" text-anchor="middle" font-family="Liberation Sans" font-size="12" fill="#555">11</text><rect x="7" y="580" width="3" height="1" fill="#555"/><rect x="4" y="592" width="7" height="1" fill="#555"/></svg>
<div class="a" style="left:54px;top:442px;width:16px;height:10px;background:#d8d8d8;border:1px solid #cccccc;box-sizing:border-box"></div>
<div class="a" style="left:281px;top:211px;width:1022px;height:601px;background:#fff;border:1px solid #bcbfc5;border-bottom:none;box-sizing:border-box"></div>
<div class="a" style="left:336px;top:261px;width:900px;height:183px;background:#dbe5f1;border:2px solid #b8cce4;box-sizing:border-box"></div>
<div class="t" style="left:368.50px;top:323.61px;font-size:60px;line-height:60px;font-weight:700;color:#1f497d;">Invoice</div>
<div class="t" style="right:630.50px;top:273.28px;font-size:18.33px;line-height:18.33px;font-weight:700;color:#7b735a;word-spacing:0.8px;"><span style="background:#fdefc1">Your Company Name</span></div>
<div class="t" style="right:630.50px;top:305.90px;font-size:15px;line-height:15px;font-weight:400;color:#7b735a;word-spacing:1.9px;"><span style="background:#fdefc1">Your Business Address</span></div>
<div class="t" style="right:630.50px;top:334.90px;font-size:15px;line-height:15px;font-weight:400;color:#7b735a;"><span style="background:#fdefc1">City</span></div>
<div class="t" style="right:630.50px;top:362.90px;font-size:15px;line-height:15px;font-weight:400;color:#7b735a;"><span style="background:#fdefc1">Country</span></div>
<div class="t" style="right:630.50px;top:391.40px;font-size:15px;line-height:15px;font-weight:400;color:#7b735a;"><span style="background:#fdefc1">Postal</span></div>
<div class="t" style="left:361.50px;top:482.20px;font-size:15px;line-height:15px;font-weight:700;color:#000;">BILL TO:</div>
<div class="a" style="left:352px;top:508px;width:169px;height:26px;border:1px solid #a6a6a6;border-radius:3px;box-sizing:border-box"></div>
<svg class="a" style="left:357px;top:515px;" width="8" height="9" viewBox="0 0 8 9"><path d="M1 1.5 H6 M1 4.5 H6 M1 7.5 H6" stroke="#888" stroke-width="1"/></svg>
<div class="t" style="left:369.00px;top:510.97px;font-size:20px;line-height:20px;font-weight:700;color:#7b735a;"><span style="background:#fdefc1">Company Name</span></div>
<div class="t" style="left:369.00px;top:548.69px;font-size:16.67px;line-height:16.67px;font-weight:400;color:#7b735a;"><span style="background:#fdefc1">Address</span></div>
<div class="t" style="left:369.00px;top:579.99px;font-size:16.67px;line-height:16.67px;font-weight:400;color:#7b735a;"><span style="background:#fdefc1">City</span></div>
<div class="t" style="left:369.00px;top:611.29px;font-size:16.67px;line-height:16.67px;font-weight:400;color:#7b735a;"><span style="background:#fdefc1">Country</span></div>
<div class="t" style="left:369.00px;top:642.59px;font-size:16.67px;line-height:16.67px;font-weight:400;color:#7b735a;"><span style="background:#fdefc1">Postal</span></div>
<div class="t" style="right:630.50px;top:481.70px;font-size:15px;line-height:15px;font-weight:700;color:#000;">INVOICE #</div>
<div class="t" style="right:630.00px;top:510.59px;font-size:16.67px;line-height:16.67px;font-weight:400;color:#7b735a;"><span style="background:#fdefc1">00000001</span></div>
<div class="t" style="right:630.50px;top:541.20px;font-size:15px;line-height:15px;font-weight:700;color:#000;">DATE</div>
<div class="t" style="right:630.50px;top:600.50px;font-size:15px;line-height:15px;font-weight:700;color:#000;">INVOICE DUE DATE</div>
<div class="a" style="left:1066px;top:568px;width:158px;height:20px;background:#fdefc1"></div>
<svg class="a" style="left:1066px;top:568px;" width="158" height="20" viewBox="0 0 158 20"><rect x="0.00" y="0" width="1" height="19.5" fill="#bdbdbd"/><rect x="16.20" y="0" width="1" height="19.5" fill="#bdbdbd"/><rect x="32.20" y="0" width="1" height="19.5" fill="#bdbdbd"/><rect x="47.30" y="0" width="1" height="19.5" fill="#bdbdbd"/><rect x="63.60" y="0" width="1" height="19.5" fill="#bdbdbd"/><rect x="79.30" y="0" width="1" height="19.5" fill="#bdbdbd"/><rect x="94.70" y="0" width="1" height="19.5" fill="#bdbdbd"/><rect x="110.50" y="0" width="1" height="19.5" fill="#bdbdbd"/><rect x="125.80" y="0" width="1" height="19.5" fill="#bdbdbd"/><rect x="141.60" y="0" width="1" height="19.5" fill="#bdbdbd"/><rect x="157.80" y="0" width="1" height="19.5" fill="#bdbdbd"/><rect x="0" y="0" width="158" height="1" fill="#bdbdbd"/><rect x="0" y="18.5" width="158" height="1" fill="#bdbdbd"/><text x="8.60" y="15.6" text-anchor="middle" font-family="Liberation Sans" font-size="16.67" fill="#7b735a">M</text><text x="24.70" y="15.6" text-anchor="middle" font-family="Liberation Sans" font-size="16.67" fill="#7b735a">M</text><text x="40.25" y="15.6" text-anchor="middle" font-family="Liberation Sans" font-size="16.67" fill="#7b735a">/</text><text x="55.95" y="15.6" text-anchor="middle" font-family="Liberation Sans" font-size="16.67" fill="#7b735a">D</text><text x="71.95" y="15.6" text-anchor="middle" font-family="Liberation Sans" font-size="16.67" fill="#7b735a">D</text><text x="87.50" y="15.6" text-anchor="middle" font-family="Liberation Sans" font-size="16.67" fill="#7b735a">/</text><text x="103.10" y="15.6" text-anchor="middle" font-family="Liberation Sans" font-size="16.67" fill="#7b735a">Y</text><text x="118.65" y="15.6" text-anchor="middle" font-family="Liberation Sans" font-size="16.67" fill="#7b735a">Y</text><text x="134.20" y="15.6" text-anchor="middle" font-family="Liberation Sans" font-size="16.67" fill="#7b735a">Y</text><text x="150.20" y="15.6" text-anchor="middle" font-family="Liberation Sans" font-size="16.67" fill="#7b735a">Y</text></svg>
<div class="a" style="left:1066px;top:628px;width:158px;height:20px;background:#fdefc1"></div>
<svg class="a" style="left:1066px;top:628px;" width="158" height="20" viewBox="0 0 158 20"><rect x="0.00" y="0" width="1" height="19.5" fill="#bdbdbd"/><rect x="16.20" y="0" width="1" height="19.5" fill="#bdbdbd"/><rect x="32.20" y="0" width="1" height="19.5" fill="#bdbdbd"/><rect x="47.30" y="0" width="1" height="19.5" fill="#bdbdbd"/><rect x="63.60" y="0" width="1" height="19.5" fill="#bdbdbd"/><rect x="79.30" y="0" width="1" height="19.5" fill="#bdbdbd"/><rect x="94.70" y="0" width="1" height="19.5" fill="#bdbdbd"/><rect x="110.50" y="0" width="1" height="19.5" fill="#bdbdbd"/><rect x="125.80" y="0" width="1" height="19.5" fill="#bdbdbd"/><rect x="141.60" y="0" width="1" height="19.5" fill="#bdbdbd"/><rect x="157.80" y="0" width="1" height="19.5" fill="#bdbdbd"/><rect x="0" y="0" width="158" height="1" fill="#bdbdbd"/><rect x="0" y="18.5" width="158" height="1" fill="#bdbdbd"/><text x="8.60" y="15.6" text-anchor="middle" font-family="Liberation Sans" font-size="16.67" fill="#7b735a">M</text><text x="24.70" y="15.6" text-anchor="middle" font-family="Liberation Sans" font-size="16.67" fill="#7b735a">M</text><text x="40.25" y="15.6" text-anchor="middle" font-family="Liberation Sans" font-size="16.67" fill="#7b735a">/</text><text x="55.95" y="15.6" text-anchor="middle" font-family="Liberation Sans" font-size="16.67" fill="#7b735a">D</text><text x="71.95" y="15.6" text-anchor="middle" font-family="Liberation Sans" font-size="16.67" fill="#7b735a">D</text><text x="87.50" y="15.6" text-anchor="middle" font-family="Liberation Sans" font-size="16.67" fill="#7b735a">/</text><text x="103.10" y="15.6" text-anchor="middle" font-family="Liberation Sans" font-size="16.67" fill="#7b735a">Y</text><text x="118.65" y="15.6" text-anchor="middle" font-family="Liberation Sans" font-size="16.67" fill="#7b735a">Y</text><text x="134.20" y="15.6" text-anchor="middle" font-family="Liberation Sans" font-size="16.67" fill="#7b735a">Y</text><text x="150.20" y="15.6" text-anchor="middle" font-family="Liberation Sans" font-size="16.67" fill="#7b735a">Y</text></svg>
<div class="a" style="left:337px;top:706px;width:899px;height:44px;background:#dbe5f1"></div>
<div class="a" style="left:337px;top:750px;width:1px;height:62px;background:#d3e0f0"></div>
<div class="a" style="left:445px;top:750px;width:1px;height:62px;background:#d3e0f0"></div>
<div class="a" style="left:869px;top:750px;width:1px;height:62px;background:#d3e0f0"></div>
<div class="a" style="left:960px;top:750px;width:1px;height:62px;background:#d3e0f0"></div>
<div class="a" style="left:1085px;top:750px;width:1px;height:62px;background:#d3e0f0"></div>
<div class="a" style="left:1143px;top:750px;width:1px;height:62px;background:#d3e0f0"></div>
<div class="a" style="left:1235px;top:750px;width:1px;height:62px;background:#d3e0f0"></div>
<div class="t" style="left:344.50px;top:716.20px;font-size:15px;line-height:15px;font-weight:700;color:#1f3864;">ITEMS</div>
<div class="t" style="left:453.50px;top:716.20px;font-size:15px;line-height:15px;font-weight:700;color:#1f3864;">DESCRIPTION</div>
<div class="t" style="right:894.50px;top:716.20px;font-size:15px;line-height:15px;font-weight:700;color:#1f3864;">QUANTITY</div>
<div class="t" style="right:776.50px;top:716.20px;font-size:15px;line-height:15px;font-weight:700;color:#1f3864;">PRICE</div>
<div class="t" style="right:717.50px;top:716.20px;font-size:15px;line-height:15px;font-weight:700;color:#1f3864;">TAX</div>
<div class="t" style="right:626.50px;top:716.20px;font-size:15px;line-height:15px;font-weight:700;color:#1f3864;">AMOUNT</div>
<div class="t" style="left:345.00px;top:760.99px;font-size:16.67px;line-height:16.67px;font-weight:400;color:#7b735a;"><span style="background:#fdefc1">ITEM</span></div>
<div class="t" style="left:453.00px;top:760.99px;font-size:16.67px;line-height:16.67px;font-weight:400;color:#7b735a;"><span style="background:#fdefc1">Description</span></div>
<div class="t" style="right:901.00px;top:760.99px;font-size:16.67px;line-height:16.67px;font-weight:400;color:#7b735a;"><span style="background:#fdefc1">0</span></div>
<div class="t" style="right:776.00px;top:760.99px;font-size:16.67px;line-height:16.67px;font-weight:400;color:#7b735a;"><span style="color:#000">$</span><span style="background:#fdefc1">000.00</span></div>
<div class="t" style="right:717.50px;top:760.99px;font-size:16.67px;line-height:16.67px;font-weight:400;color:#7b735a;"><span style="background:#fdefc1">1</span><span style="color:#000">%</span></div>
<div class="t" style="right:626.00px;top:760.99px;font-size:16.67px;line-height:16.67px;font-weight:400;color:#7b735a;"><span style="color:#000">$</span><span style="background:#fdefc1">000.00</span></div>
<div class="a" style="left:1511px;top:156px;width:15px;height:16px;background:#f1f1f1;border:1px solid #d2d2d2;box-sizing:border-box"></div>
<svg class="a" style="left:1514px;top:161px;" width="9" height="5" viewBox="0 0 9 5"><path d="M0.5 4.5 L4.5 0.5 L8.5 4.5 Z" fill="#a8a8a8"/></svg>
<div class="a" style="left:1510px;top:173px;width:16px;height:283px;background:#f1f1f1;border:1px solid #cfcfcf;box-sizing:border-box"></div>
<svg class="a" style="left:1515px;top:306px;" width="7" height="14" viewBox="0 0 7 14"><rect x="0" y="0" width="7" height="1" fill="#c8c8c8"/><rect x="0" y="2" width="7" height="1" fill="#c8c8c8"/><rect x="0" y="4" width="7" height="1" fill="#c8c8c8"/><rect x="0" y="6" width="7" height="1" fill="#c8c8c8"/><rect x="0" y="8" width="7" height="1" fill="#c8c8c8"/><rect x="0" y="10" width="7" height="1" fill="#c8c8c8"/><rect x="0" y="12" width="7" height="1" fill="#c8c8c8"/></svg>
<div class="a" style="left:1511px;top:795px;width:15px;height:16px;background:#f1f1f1;border:1px solid #d2d2d2;box-sizing:border-box"></div>
<svg class="a" style="left:1514px;top:801px;" width="9" height="5" viewBox="0 0 9 5"><path d="M0.5 0.5 L4.5 4.5 L8.5 0.5 Z" fill="#a8a8a8"/></svg>
<div class="a" style="left:1528px;top:155px;width:1px;height:657px;background:#cbcbcb"></div>
<div class="a" style="left:1529px;top:155px;width:274px;height:657px;background:#f1f1f1"></div>
<div class="a" style="left:1803px;top:155px;width:1px;height:657px;background:#cbcbcb"></div>
<div class="a" style="left:1804px;top:155px;width:49px;height:657px;background:#f1f1f1"></div>
<div class="t" style="left:1547.50px;top:167.36px;font-size:13.75px;line-height:13.75px;font-weight:700;color:#444;">Text field</div>
<div class="t" style="left:1547.00px;top:195.96px;font-size:13.75px;line-height:13.75px;font-weight:400;color:#444;">Who needs to fill this out?</div>
<div class="a" style="left:1547px;top:213px;width:243px;height:27px;background:#fff;border:1px solid #cfcfcf;border-radius:2px;box-sizing:border-box"></div>
<div class="a" style="left:1555px;top:219px;width:15px;height:15px;background:#fdefc1;border:1px solid #c8b98e;box-sizing:border-box"></div>
<div class="t" style="left:1579.00px;top:220.06px;font-size:13.75px;line-height:13.75px;font-weight:400;color:#444;">Anyone</div>
<svg class="a" style="left:1775.8px;top:223.6px;" width="9" height="7" viewBox="0 0 9 7"><path d="M1 1.6 L4.4 5.2 L7.8 1.6" fill="none" stroke="#333" stroke-width="1.1"/></svg>
<div class="a" style="left:1547px;top:250px;width:243px;height:1px;background:#cbcbcb"></div>
<div class="t" style="left:1547.00px;top:264.36px;font-size:13.75px;line-height:13.75px;font-weight:400;color:#444;">Key</div>
<div class="a" style="left:1547px;top:281px;width:243px;height:27px;background:#fff;border:1px solid #cfcfcf;border-radius:2px;box-sizing:border-box"></div>
<div class="t" style="left:1552.00px;top:288.06px;font-size:13.75px;line-height:13.75px;font-weight:400;color:#444;">Text6</div>
<svg class="a" style="left:1775.8px;top:291.6px;" width="9" height="7" viewBox="0 0 9 7"><path d="M1 1.6 L4.4 5.2 L7.8 1.6" fill="none" stroke="#333" stroke-width="1.1"/></svg>
<div class="t" style="left:1547.00px;top:321.26px;font-size:13.75px;line-height:13.75px;font-weight:400;color:#444;">Placeholder</div>
<div class="a" style="left:1547px;top:338px;width:243px;height:27px;background:#fff;border:1px solid #cfcfcf;border-radius:2px;box-sizing:border-box"></div>
<div class="t" style="left:1552.00px;top:345.16px;font-size:13.75px;line-height:13.75px;font-weight:400;color:#444;">Company Name</div>
<div class="t" style="left:1547.00px;top:379.36px;font-size:13.75px;line-height:13.75px;font-weight:400;color:#444;">Tag</div>
<div class="a" style="left:1547px;top:395px;width:243px;height:27px;background:#fff;border:1px solid #cfcfcf;border-radius:2px;box-sizing:border-box"></div>
<div class="t" style="left:1547.00px;top:436.46px;font-size:13.75px;line-height:13.75px;font-weight:400;color:#444;">Tip</div>
<div class="a" style="left:1547px;top:452px;width:243px;height:44px;background:#fff;border:1px solid #cfcfcf;border-radius:2px;box-sizing:border-box"></div>
<div class="t" style="left:1552.30px;top:457.76px;font-size:13.75px;line-height:13.75px;font-weight:400;color:#444;">Company Name</div>
<div class="t" style="left:1547.00px;top:510.06px;font-size:13.75px;line-height:13.75px;font-weight:400;color:#444;">Default value</div>
<div class="a" style="left:1547px;top:527px;width:243px;height:26px;background:#fff;border:1px solid #cfcfcf;border-radius:2px;box-sizing:border-box"></div>
<div class="a" style="left:1547px;top:564px;width:243px;height:1px;background:#cbcbcb"></div>
<div class="t" style="left:1547.00px;top:577.96px;font-size:13.75px;line-height:13.75px;font-weight:400;color:#444;">Format</div>
<div class="a" style="left:1547px;top:595px;width:243px;height:27px;background:#fff;border:1px solid #5a5a5a;border-radius:2px;box-sizing:border-box"></div>
<div class="t" style="left:1552.30px;top:602.26px;font-size:13.75px;line-height:13.75px;font-weight:400;color:#444;">None</div>
<svg class="a" style="left:1775.8px;top:604.6px;" width="9" height="7" viewBox="0 0 9 7"><path d="M1 5.2 L4.4 1.6 L7.8 5.2" fill="none" stroke="#333" stroke-width="1.1"/></svg>
<div class="a" style="left:1547px;top:795px;width:17px;height:17px;background:#fff;border:1px solid #cfcfcf;border-radius:2px;box-sizing:border-box"></div>
<div class="t" style="left:1574.50px;top:797.96px;font-size:13.75px;line-height:13.75px;font-weight:400;color:#444;">Characters limit</div>
<div class="a" style="left:1734px;top:795px;width:56px;height:17px;background:#fff;border:1px solid #cfcfcf;border-radius:2px;box-sizing:border-box"></div>
<div class="t" style="left:1751.00px;top:797.96px;font-size:13.75px;line-height:13.75px;font-weight:400;color:#c2c2c2;">10</div>
<svg class="a" style="left:1774px;top:806px;" width="9" height="6" viewBox="0 0 9 6"><path d="M1 1 L4.5 4.5 L8 1" fill="none" stroke="#999" stroke-width="1.2"/></svg>
<div class="a" style="left:1547px;top:626px;width:243px;height:175px;background:#fff;border:1px solid #dcdcdc;border-radius:4px;box-sizing:border-box;box-shadow:0 2px 6px rgba(0,0,0,0.2)"></div>
<div class="a" style="left:1548px;top:632px;width:241px;height:33px;background:#7d858c"></div>
<div class="t" style="left:1573.00px;top:642.36px;font-size:13.75px;line-height:13.75px;font-weight:700;color:#fff;">None</div>
<div class="t" style="left:1573.00px;top:674.16px;font-size:13.75px;line-height:13.75px;font-weight:400;color:#444;">Digits</div>
<div class="t" style="left:1573.00px;top:706.76px;font-size:13.75px;line-height:13.75px;font-weight:400;color:#444;">Letters</div>
<div class="t" style="left:1573.00px;top:739.36px;font-size:13.75px;line-height:13.75px;font-weight:400;color:#444;">Arbitrary Mask</div>
<div class="t" style="left:1573.00px;top:771.96px;font-size:13.75px;line-height:13.75px;font-weight:400;color:#444;">Regular expression</div>
<svg class="a" style="left:1822px;top:184px;" width="13" height="17" viewBox="0 0 13 17"><path d="M7.8 1.2 V16 M10.8 1.2 V16" stroke="#333" stroke-width="1.1" fill="none"/><path d="M8 0.6 H6.5 Q1.2 0.6 1.2 4.8 Q1.2 9 6.5 9 H8 Z" fill="#333"/><rect x="7.2" y="0.6" width="4.8" height="1.2" fill="#333"/></svg>
<svg class="a" style="left:1819px;top:233px;" width="19" height="14" viewBox="0 0 19 14"><g fill="#333"><rect x="0" y="0" width="19" height="2.2"/><rect x="0" y="12.8" width="19" height="1.2"/><rect x="0" y="0" width="1.4" height="14"/><rect x="17.6" y="0" width="1.4" height="14"/><rect x="0" y="5.2" width="19" height="1.2"/><rect x="0" y="9" width="19" height="1.2"/><rect x="6" y="0" width="1.2" height="14"/><rect x="11.8" y="0" width="1.2" height="14"/></g></svg>
<svg class="a" style="left:1820px;top:279px;" width="18" height="18" viewBox="0 0 18 18"><g fill="none" stroke="#a6a6a6" stroke-width="1.2"><path d="M0.6 0.6 H16.6 V16.6 H0.6 Z"/><circle cx="4.5" cy="4.5" r="1.8"/><path d="M0.6 13 L5 9.5 L7.5 11.5 L11.5 7.5 L16.6 12"/></g></svg>
<svg class="a" style="left:1820px;top:324px;" width="17" height="22" viewBox="0 0 17 22"><g fill="none" stroke="#a6a6a6" stroke-width="1.2"><path d="M1.6 0.6 H15.4 V20.4 H1.6 Z"/><path d="M3 3 H14 M3 18 H14" stroke-width="1.6"/></g></svg>
<svg class="a" style="left:1819px;top:374px;" width="19" height="18" viewBox="0 0 19 18"><g fill="none" stroke="#a6a6a6" stroke-width="1.2"><path d="M6.2 10.6 H1.4 V0.8 H11.4 V4.2"/><circle cx="11.5" cy="10.3" r="6.1"/></g></svg>
<svg class="a" style="left:1819px;top:420px;" width="19" height="19" viewBox="0 0 19 19"><g fill="none" stroke="#a6a6a6" stroke-width="1.2"><path d="M1.6 12.6 H5.4 V17.4 H1.6 Z M7.6 7.8 H11.4 V17.4 H7.6 Z M13.6 1.6 H17.4 V17.4 H13.6 Z"/></g></svg>
<svg class="a" style="left:1819px;top:466px;" width="19" height="24" viewBox="0 0 19 24"><text x="9" y="13" text-anchor="middle" font-family="Liberation Sans" font-size="15" fill="#a6a6a6" opacity="0.85">Ta</text><path d="M3 21 Q9.5 13.5 16 21" fill="none" stroke="#a6a6a6" stroke-width="1.2"/></svg>
<svg class="a" style="left:1819px;top:514px;" width="20" height="22" viewBox="0 0 20 22"><g fill="none" stroke="#a6a6a6" stroke-width="1.1"><path d="M5.8 19.4 H1.6 V1.4 H9.5 L13.4 5.3 V11.8"/><path d="M9.3 1.4 V5.5 H13.4"/><path d="M3.8 7.6 H10.5 M3.8 10 H12"/><path d="M6.6 12.4 H17.6 V20.4 H6.6 Z M6.6 12.4 L12.1 16.8 L17.6 12.4 M6.6 20.4 L10.4 15.6 M17.6 20.4 L13.8 15.6"/></g></svg>
<div class="a" style="left:1804px;top:554px;width:49px;height:37px;background:#7d858c"></div>
<svg class="a" style="left:1818px;top:566px;" width="21" height="14" viewBox="0 0 21 14"><g fill="none" stroke="#fff" stroke-width="1.2"><path d="M0.6 0.6 H19.4 V12.4 H0.6 Z"/><path d="M3.5 3.5 H6 M4.75 3.5 V9.5 M3.5 9.5 H6"/></g></svg>
<div class="a" style="left:0px;top:812px;width:1853px;height:1px;background:#cbcbcb"></div>
<div class="a" style="left:0px;top:813px;width:1853px;height:29px;background:#f1f1f1"></div>
<div class="t" style="left:50.00px;top:822.46px;font-size:13.75px;line-height:13.75px;font-weight:700;color:#444;">Page 1 of 1</div>
<div class="a" style="left:132px;top:813px;width:1px;height:29px;background:#cbcbcb"></div>
<svg class="a" style="left:144px;top:819px;" width="18" height="18" viewBox="0 0 18 18"><g fill="#333"><rect x="1" y="1" width="15" height="1.1"/><rect x="1" y="4" width="15" height="1.1"/><rect x="1" y="7" width="10" height="1.1"/></g><g fill="none" stroke="#333" stroke-width="1.1"><path d="M2.2 11 L3.6 10.3 V17"/><path d="M5.6 11.3 Q6 10.2 7.4 10.2 Q9.1 10.2 9.1 11.8 Q9.1 13 7.6 14.3 L5.6 16.5 H9.5"/><path d="M11.3 10.3 H15 L13 12.7 Q15.5 12.7 15.5 14.7 Q15.5 16.7 13.3 16.7 Q11.8 16.7 11.2 15.8"/></g></svg>
<div class="t" style="left:170.00px;top:822.46px;font-size:13.75px;line-height:13.75px;font-weight:700;color:#444;">Word count</div>
<div class="a" style="left:1289px;top:813px;width:1px;height:29px;background:#cbcbcb"></div>
<div class="t" style="left:1306.00px;top:820.96px;font-size:13.75px;line-height:13.75px;font-weight:700;color:#444;">English – United States</div>
<svg class="a" style="left:1466px;top:825px;" width="9" height="6" viewBox="0 0 9 6"><path d="M1 1 L4.5 4.5 L8 1" fill="none" stroke="#333" stroke-width="1.2"/></svg>
<svg class="a" style="left:1483px;top:818px;" width="21" height="21" viewBox="0 0 21 21"><g fill="none" stroke="#333" stroke-width="1.15"><circle cx="10.5" cy="10.5" r="9.3"/><ellipse cx="10.5" cy="10.5" rx="4.3" ry="9.3"/><path d="M10.5 1.2 V19.8 M1.5 7.5 H19.5 M1.5 13.5 H19.5"/></g></svg>
<div class="a" style="left:1519px;top:816px;width:25px;height:25px;background:#7d858c;border-radius:1px"></div>
<svg class="a" style="left:1521px;top:819px;" width="21" height="19" viewBox="0 0 21 19"><text x="1.5" y="8.2" font-family="Liberation Sans" font-size="8.5" fill="#fff">ABC</text><path d="M6 13 L9.5 16.5 L18.5 7.5" fill="none" stroke="#fff" stroke-width="1.5"/></svg>
<div class="a" style="left:1555px;top:813px;width:1px;height:29px;background:#cbcbcb"></div>
<svg class="a" style="left:1572px;top:818px;" width="17" height="21" viewBox="0 0 17 21"><g fill="none" stroke="#333" stroke-width="1.2"><path d="M1.6 1.6 H15.4 V19.4 H1.6 Z"/><path d="M8.5 4 V8 M6.8 5.6 L8.5 4 L10.2 5.6 M8.5 17 V13 M6.8 15.4 L8.5 17 L10.2 15.4 M4 10.5 H6.5 M5.2 9 L4 10.5 L5.2 12 M13 10.5 H10.5 M11.8 9 L13 10.5 L11.8 12"/></g></svg>
<svg class="a" style="left:1608px;top:821px;" width="22" height="15" viewBox="0 0 22 15"><g fill="none" stroke="#333" stroke-width="1.2"><path d="M1.6 1 V14 M20.4 1 V14 M4 7.5 H18 M7 4.5 L4 7.5 L7 10.5 M15 4.5 L18 7.5 L15 10.5"/></g></svg>
<svg class="a" style="left:1650px;top:827px;" width="15" height="3" viewBox="0 0 15 3"><path d="M1 1.5 H14" stroke="#333" stroke-width="1.2"/></svg>
<div class="t" style="left:1685.00px;top:822.36px;font-size:13.75px;line-height:13.75px;font-weight:700;color:#444;">Zoom 100%</div>
<svg class="a" style="left:1783px;top:821px;" width="15" height="15" viewBox="0 0 15 15"><path d="M1 7.5 H14 M7.5 1 V14" stroke="#333" stroke-width="1.2"/></svg>
</body></html>
